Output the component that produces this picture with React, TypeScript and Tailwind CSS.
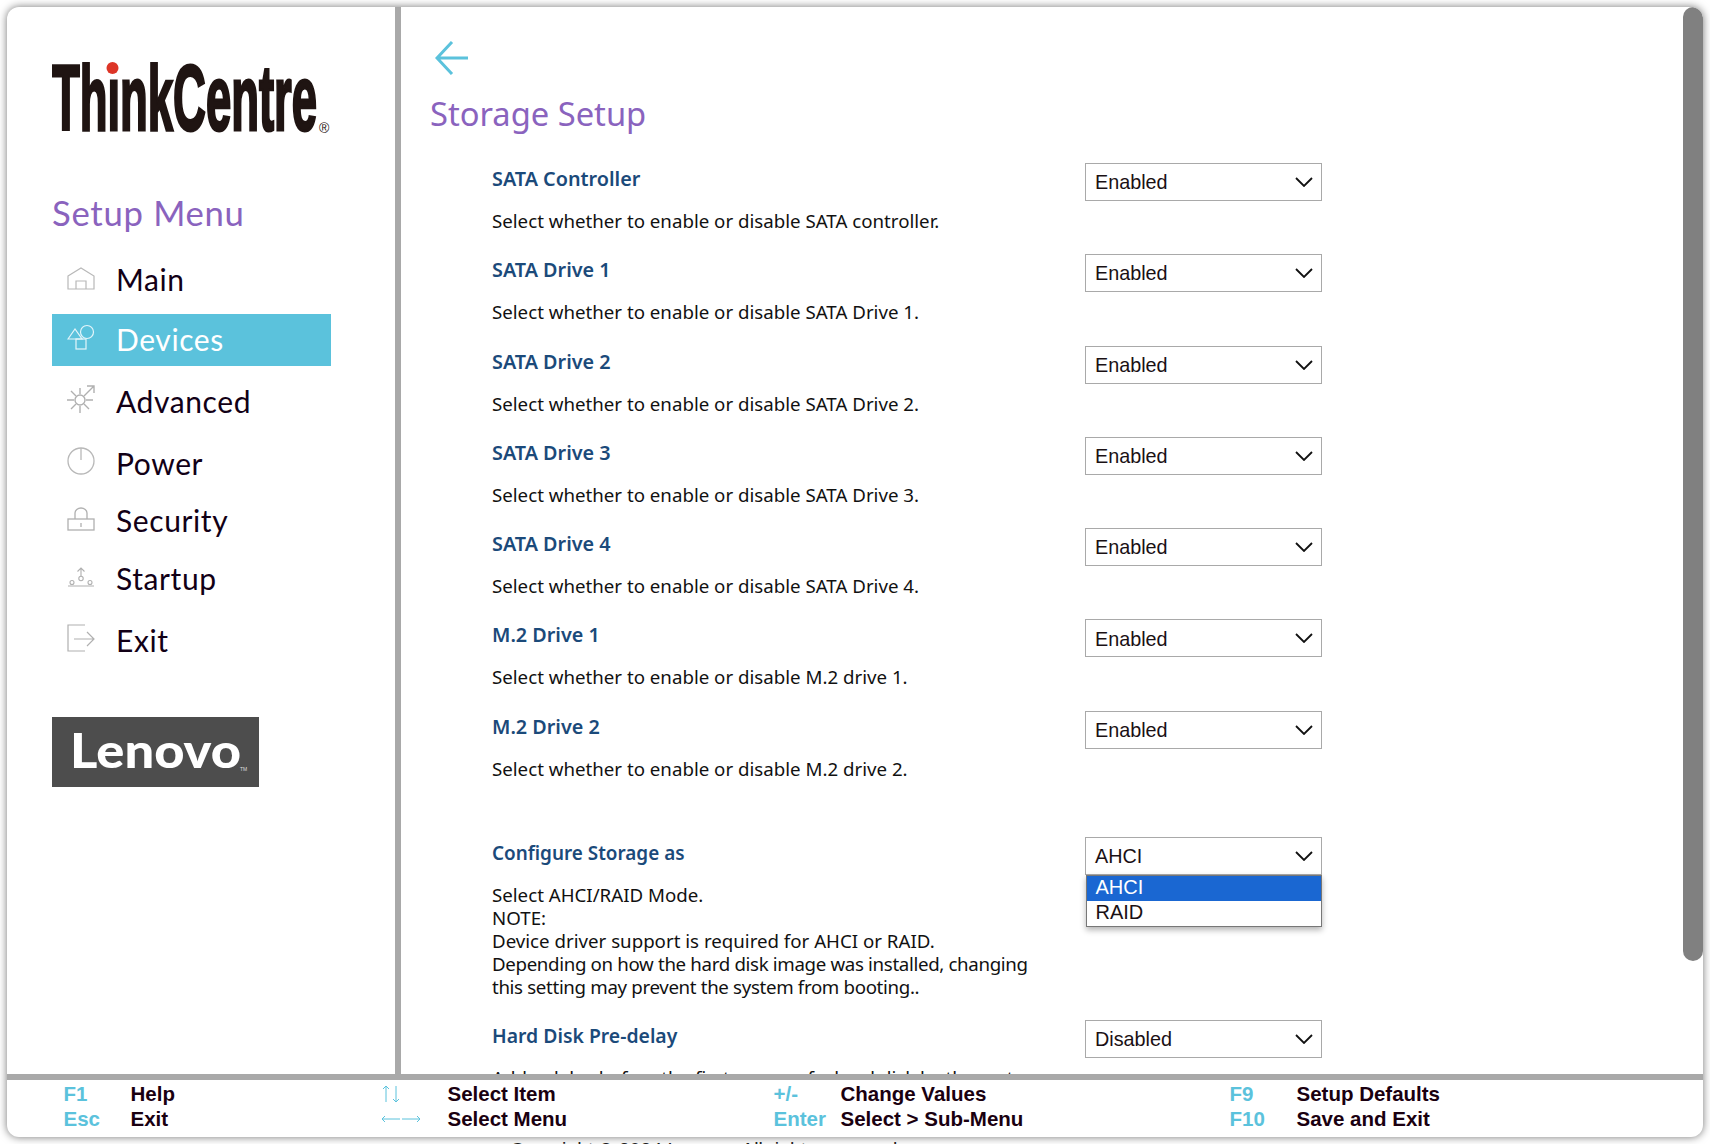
import { ReactNode } from 'react'

const SIDE_FONT = "font-['Lato',sans-serif]"
const BODY_FONT = "font-['Noto_Sans',sans-serif]"

function HomeIcon() {
  return (
    <svg viewBox="0 0 28 28" className="w-7 h-7" fill="none" stroke="#b8b8b8" strokeWidth="1.2">
      <path d="M1 13 L14 5 L27 13 V26 H1 Z" />
      <path d="M9 26 V18 H19 V26" />
    </svg>
  )
}

function ShapesIcon() {
  return (
    <svg viewBox="0 0 28 28" className="w-7 h-7" fill="none" stroke="#e4f5fa" strokeWidth="1.2">
      <circle cx="20" cy="9" r="6.5" />
      <path d="M1 16 L8 6 L15 16 Z" />
      <rect x="9" y="16" width="10" height="10" />
    </svg>
  )
}

function GearIcon() {
  return (
    <svg viewBox="0 0 28 28" className="w-7 h-7" fill="none" stroke="#b0b0b0" strokeWidth="1.4">
      <circle cx="13" cy="15" r="5" />
      <path d="M13 3 V9 M13 21 V28 M0 15 H7 M19 15 H26 M4 6 L9 11 M4 24 L9 19 M17 19 L22 24 M17 11 L27 1 M20 1 H27 V8" />
    </svg>
  )
}

function PowerIcon() {
  return (
    <svg viewBox="0 0 28 28" className="w-7 h-7" fill="none" stroke="#b8b8b8" strokeWidth="1.3">
      <circle cx="14" cy="14" r="13" />
      <path d="M14 1 V13" />
    </svg>
  )
}

function LockIcon() {
  return (
    <svg viewBox="0 0 28 28" className="w-7 h-7" fill="none" stroke="#b0b0b0" strokeWidth="1.3">
      <rect x="1" y="15" width="26" height="11" />
      <path d="M8 15 V9 A6 5 0 0 1 20 9 V15 M14 19 V23" />
    </svg>
  )
}

function StartupIcon() {
  return (
    <svg viewBox="0 0 28 28" className="w-7 h-7" fill="none" stroke="#b0b0b0" strokeWidth="1.1">
      <path d="M1 24 H27 M14 6 V14 M10.500 9.500 L14 6 L17.500 9.500" />
      <circle cx="14" cy="16.500" r="2.200" />
      <circle cx="5" cy="20.500" r="2" />
      <circle cx="23" cy="20.500" r="2" />
    </svg>
  )
}

function ExitIcon() {
  return (
    <svg viewBox="0 0 28 28" className="w-7 h-7" fill="none" stroke="#b0b0b0" strokeWidth="1.2">
      <path d="M18 1 H1 V27 H18" />
      <path d="M7 15 H27 M20 8 L27 15 L20 22" />
    </svg>
  )
}

function NavItem({ icon, label, active, className }: { icon: ReactNode; label: string; active?: boolean; className: string }) {
  return (
    <div className={`flex items-center pl-[15px] ${active ? 'bg-[#5bc2dc] text-white' : 'text-[#120016]'} ${className}`}>
      <span className="w-[49px] shrink-0 -mt-1">{icon}</span>
      <span className="text-[30px] leading-none tracking-[0.02em]">{label}</span>
    </div>
  )
}

function Chevron() {
  return (
    <svg viewBox="0 0 18 10" className="w-[18px] h-[10px]" fill="none" stroke="#111" strokeWidth="1.800">
      <path d="M1 1 L9 9 L17 1" />
    </svg>
  )
}

function SelectBox({ value }: { value: string }) {
  return (
    <div className="w-[237px] h-[38px] shrink-0 border border-[#a9a9a9] bg-white flex items-center justify-between pl-[9px] pr-[8px] font-['Liberation_Sans',sans-serif] text-[19.800px] text-[#1a1014]">
      <span className="pt-[2px]">{value}</span>
      <Chevron />
    </div>
  )
}

function SettingRow({ title, desc }: { title: string; desc: string }) {
  return (
    <div className="flex h-[91.3px]">
      <div className="w-[593px] pt-1">
        <div className="text-[19.800px] leading-6 font-semibold text-[#1b4a7a]">{title}</div>
        <div className="mt-[18px] text-[18.700px] leading-[23px] text-[#111]">{desc}</div>
      </div>
      <SelectBox value="Enabled" />
    </div>
  )
}

const rows = [
  ['SATA Controller', 'Select whether to enable or disable SATA controller.'],
  ['SATA Drive 1', 'Select whether to enable or disable SATA Drive 1.'],
  ['SATA Drive 2', 'Select whether to enable or disable SATA Drive 2.'],
  ['SATA Drive 3', 'Select whether to enable or disable SATA Drive 3.'],
  ['SATA Drive 4', 'Select whether to enable or disable SATA Drive 4.'],
  ['M.2 Drive 1', 'Select whether to enable or disable M.2 drive 1.'],
  ['M.2 Drive 2', 'Select whether to enable or disable M.2 drive 2.'],
]

function KeyGroup({ width, items }: { width: string; items: [ReactNode, string][] }) {
  return (
    <div className={`${width} shrink-0 flex flex-col -mt-[4px]`}>
      {items.map(([key, value]) => (
        <div key={value} className="flex h-[25px] items-center">
          <span className="w-[67px] shrink-0 text-[#5bc2dc]">{key}</span>
          <span className="text-[#1a0010]">{value}</span>
        </div>
      ))}
    </div>
  )
}

export default function App() {
  return (
    <div className="h-screen overflow-hidden bg-white px-[7px] pt-[7px]">
      <div className="relative h-[1130px] flex flex-col overflow-hidden rounded-xl bg-white shadow-[0_0_8px_rgba(0,0,0,0.55)]">
        <div className="flex flex-1 min-h-0">
          <aside className={`w-[394px] shrink-0 border-r-[6px] border-[#a9a9a9] pl-[45px] ${SIDE_FONT}`}>
            <svg viewBox="0 0 282 72" className="w-[282px] h-[72px] mt-[55px] block">
              <text x="0" y="68" fontFamily="Liberation Sans" fontWeight="700" fontSize="92" fill="#1f1412" stroke="#1f1412" strokeWidth="3" textLength="265" lengthAdjust="spacingAndGlyphs">ThinkCentre</text>
              <rect x="55" y="0" width="11" height="15" fill="#fff" />
              <circle cx="60.500" cy="6" r="6" fill="#dd3527" />
              <text x="267" y="71" fontFamily="Liberation Sans" fontSize="14" fill="#1f1412">®</text>
            </svg>
            <h2 className="mt-[59px] text-[34.700px] leading-10 tracking-[0.02em] text-[#8a63be]">Setup Menu</h2>
            <div className="w-[279px] mt-[20px]">
              <NavItem icon={<HomeIcon />} label="Main" className="h-[52px] mb-[9px]" />
              <NavItem icon={<ShapesIcon />} label="Devices" active className="h-[52px] pb-[3px] mb-[9px]" />
              <NavItem icon={<GearIcon />} label="Advanced" className="h-[52px] mb-[10px]" />
              <NavItem icon={<PowerIcon />} label="Power" className="h-[52px] mb-[5px]" />
              <NavItem icon={<LockIcon />} label="Security" className="h-[52px] mb-[6px]" />
              <NavItem icon={<StartupIcon />} label="Startup" className="h-[52px] mb-[10px]" />
              <NavItem icon={<ExitIcon />} label="Exit" className="h-[52px]" />
            </div>
            <div className="mt-[51px] w-[207px] h-[70px] bg-[#4d4d4d]">
              <svg viewBox="0 0 207 70" className="w-[207px] h-[70px] block">
                <text x="18" y="51" fontFamily="Lato" fontWeight="900" fontSize="47" fill="#fff" textLength="171" lengthAdjust="spacingAndGlyphs">Lenovo</text>
                <text x="188" y="54" fontFamily="Liberation Sans" fontSize="5" fill="#ddd">TM</text>
              </svg>
            </div>
          </aside>
          <main className={`relative flex-1 min-w-0 overflow-hidden pl-[29px] ${BODY_FONT}`}>
            <svg viewBox="0 0 34 34" className="w-[34px] h-[34px] mt-[34px] ml-[5px] block" fill="none" stroke="#5bc2dc" strokeWidth="3">
              <path d="M33 17 H2 M17 1 L2 17 L17 33" />
            </svg>
            <h1 className="mt-[19px] text-[32.700px] leading-10 text-[#8a63be]">Storage Setup</h1>
            <div className="pl-[62px] mt-[29px]">
              {rows.map(([title, desc]) => (
                <SettingRow key={title} title={title} desc={desc} />
              ))}
              <div className="flex mt-[35px] h-[183px]">
                <div className="w-[593px] pt-1">
                  <div className="text-[18.900px] leading-6 font-semibold text-[#1b4a7a]">Configure Storage as</div>
                  <div className="mt-[18px] text-[18.700px] leading-[23px] text-[#111]">
                    Select AHCI/RAID Mode.
                    <br />
                    NOTE:
                    <br />
                    Device driver support is required for AHCI or RAID.
                    <br />
                    <span className="tracking-[-0.018em]">Depending on how the hard disk image was installed, changing</span>
                    <br />
                    <span className="tracking-[-0.018em]">this setting may prevent the system from booting..</span>
                  </div>
                </div>
                <div className="relative">
                  <SelectBox value="AHCI" />
                  <div className="absolute left-[1px] top-[38px] w-[236px] h-[52px] bg-white border border-[#777] shadow-[0_3px_6px_rgba(0,0,0,0.3)] font-['Liberation_Sans',sans-serif] text-[20px] leading-[23px] text-[#1a1014]">
                    <div className="h-[25px] pl-[8.500px] bg-[#1a67d2] text-white">AHCI</div>
                    <div className="h-[25px] pl-[8.500px]">RAID</div>
                  </div>
                </div>
              </div>
              <div className="flex">
                <div className="w-[593px] pt-1">
                  <div className="text-[19.400px] leading-6 font-semibold text-[#1b4a7a]">Hard Disk Pre-delay</div>
                  <div className="mt-[18px] text-[18.700px] leading-[23px] text-[#111]">Add a delay before the first access of a hard disk by the system.</div>
                </div>
                <SelectBox value="Disabled" />
              </div>
            </div>
            <div className="absolute right-0 top-0 w-5 h-[954px] rounded-full bg-[#808080]" />
          </main>
        </div>
        <footer className="h-[63px] shrink-0 border-t-[6px] border-[#a9a9a9] pl-[56.500px] flex items-center font-['Liberation_Sans',sans-serif] font-bold text-[20.500px]">
          <KeyGroup width="w-[317px]" items={[['F1', 'Help'], ['Esc', 'Exit']]} />
          <KeyGroup
            width="w-[393px]"
            items={[
              [
                <svg key="ud" viewBox="0 0 20 20" className="w-5 h-5" fill="none" stroke="#5bc2dc" strokeWidth="1">
                  <path d="M5 18 V2 M2 5 L5 2 L8 5 M15 2 V18 M12 15 L15 18 L18 15" />
                </svg>,
                'Select Item',
              ],
              [
                <svg key="lr" viewBox="0 0 40 12" className="w-10 h-3" fill="none" stroke="#5bc2dc" strokeWidth="1">
                  <path d="M1 6 H19 M4 3 L1 6 L4 9 M21 6 H39 M36 3 L39 6 L36 9" />
                </svg>,
                'Select Menu',
              ],
            ]}
          />
          <KeyGroup width="w-[456px]" items={[['+/-', 'Change Values'], ['Enter', 'Select > Sub-Menu']]} />
          <KeyGroup width="w-[300px]" items={[['F9', 'Setup Defaults'], ['F10', 'Save and Exit']]} />
        </footer>
      </div>
      <p className="mt-[1px] pl-[503px] font-['Liberation_Sans',sans-serif] text-[19.500px] leading-6 text-[#222]">Copyright © 2024 Lenovo. All rights reserved.</p>
    </div>
  )
}
